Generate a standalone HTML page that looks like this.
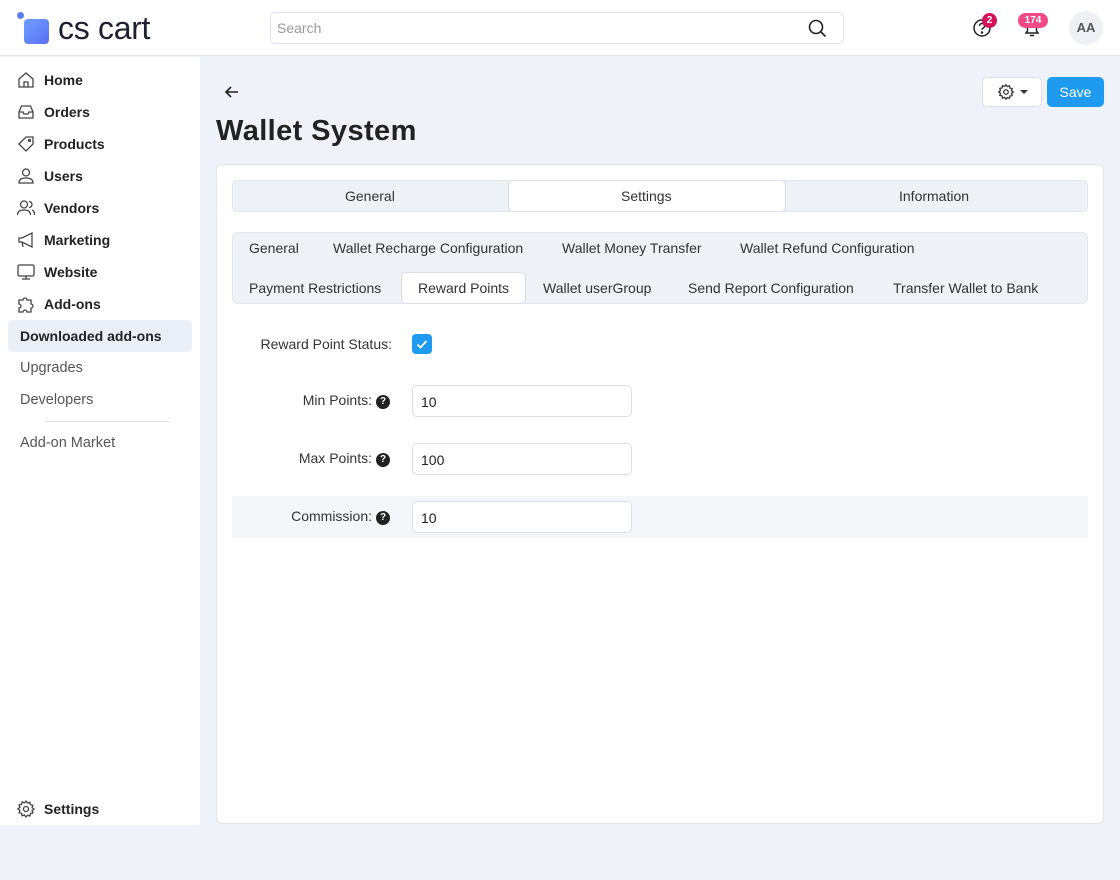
<!DOCTYPE html>
<html><head><meta charset="utf-8"><style>
*{box-sizing:border-box;margin:0;padding:0}
body{width:1120px;height:880px;background:#f0f2f9;font-family:"Liberation Sans","DejaVu Sans",sans-serif;color:#222;position:relative;overflow:hidden;font-size:14px}
.a{position:absolute;white-space:nowrap}
.hdr{left:0;top:0;width:1120px;height:56px;background:#fff;border-bottom:1px solid #e3e6ee}
.side{left:0;top:57px;width:200px;height:768px;background:#fff}
.nav{left:44px;font-weight:bold;font-size:14px;color:#222}
.ic{left:16px;width:20px;height:20px}
.sub{left:20px;font-size:14.5px;color:#555}
.card{left:216px;top:164px;width:888px;height:660px;background:#fff;border:1px solid #e1e4ec;border-radius:6px}
.tabbar{background:#eef1f6;border:1px solid #e1e5ed;border-radius:5px}
.t{font-size:14px;color:#333}
.act{background:#fff;border:1px solid #dadde5;border-radius:5px}
.lbl{font-size:14px;color:#333;text-align:right}
.inp{left:412px;width:220px;height:32px;border:1px solid #dcdfe6;border-radius:5px;background:#fff;padding:8px;font-size:14px;color:#222}
.q{display:inline-block;width:14px;height:14px;border-radius:50%;background:#222;color:#fff;font-size:10px;font-weight:bold;text-align:center;line-height:14px;margin-left:4px;vertical-align:1px}
</style></head><body>
<div class="a hdr"></div>
<div class="a" style="left:17px;top:12px;width:7px;height:7px;border-radius:50%;background:#5b7ff0"></div>
<div class="a" style="left:24px;top:19px;width:25px;height:25px;border-radius:4px;background:linear-gradient(135deg,#6fa0ff,#5b6cf5)"></div>
<div class="a" style="left:58px;top:10px;font-size:32px;color:#1c2030;letter-spacing:-0.3px">cs cart</div>
<div class="a" style="left:270px;top:12px;width:574px;height:32px;border:1px solid #dfe2ea;border-radius:5px;background:#fff"></div>
<div class="a" style="left:277px;top:20px;font-size:14px;color:#999">Search</div>
<svg class="a" style="left:807px;top:18px" width="20" height="20" viewBox="0 0 20 20" fill="none" stroke="#222" stroke-width="1.6"><circle cx="9" cy="9" r="6.5"/><path d="M14 14l4.5 4.5"/></svg>
<svg class="a" style="left:972px;top:18px" width="20" height="20" viewBox="0 0 20 20" fill="none" stroke="#222" stroke-width="1.5"><circle cx="10" cy="10" r="8"/><path d="M7.5 8a2.5 2.5 0 1 1 3.3 2.3c-.6.3-.8.7-.8 1.4"/><circle cx="10" cy="14.5" r=".5" fill="#222"/></svg>
<div class="a" style="left:982px;top:13px;width:15px;height:15px;border-radius:50%;background:#d6135a;color:#fff;font-size:10px;font-weight:bold;text-align:center;line-height:15px">2</div>
<svg class="a" style="left:1022px;top:18px" width="20" height="20" viewBox="0 0 20 20" fill="none" stroke="#222" stroke-width="1.5"><path d="M4 15h12l-1.5-2V9a4.5 4.5 0 0 0-9 0v4z"/><path d="M8 17.5h4"/></svg>
<div class="a" style="left:1018px;top:13px;width:30px;height:15px;border-radius:8px;background:#ef4a86;color:#fff;font-size:10px;font-weight:bold;text-align:center;line-height:15px">174</div>
<div class="a" style="left:1069px;top:11px;width:34px;height:34px;border-radius:50%;background:#eef0f5;color:#555;font-size:13px;font-weight:bold;text-align:center;line-height:34px">AA</div>

<div class="a side"></div>
<svg class="a ic" style="top:70px" viewBox="0 0 20 20" fill="none" stroke="#444" stroke-width="1.3"><path d="M3 9l7-6 7 6v8H3z"/><path d="M8 17v-5h4v5"/></svg>
<div class="a nav" style="top:72px">Home</div>
<svg class="a ic" style="top:102px" viewBox="0 0 20 20" fill="none" stroke="#444" stroke-width="1.3"><path d="M3 10l2.5-6h9L17 10v6H3z"/><path d="M3 10h4l1 2h4l1-2h4"/></svg>
<div class="a nav" style="top:104px">Orders</div>
<svg class="a ic" style="top:134px" viewBox="0 0 20 20" fill="none" stroke="#444" stroke-width="1.3"><path d="M10 3h7v7l-7 7-7-7z"/><circle cx="13.5" cy="6.5" r="1"/></svg>
<div class="a nav" style="top:136px">Products</div>
<svg class="a ic" style="top:166px" viewBox="0 0 20 20" fill="none" stroke="#444" stroke-width="1.3"><circle cx="10" cy="6.5" r="3.5"/><path d="M3 17c0-4 3.5-5 7-5s7 1 7 5z"/></svg>
<div class="a nav" style="top:168px">Users</div>
<svg class="a ic" style="top:198px" viewBox="0 0 20 20" fill="none" stroke="#444" stroke-width="1.3"><circle cx="8" cy="6.5" r="3.5"/><path d="M1.5 17c0-4 3-5 6.5-5s6.5 1 6.5 5M13 3.5a3 3 0 0 1 0 6M16 12c1.5.5 2.5 2 2.5 5"/></svg>
<div class="a nav" style="top:200px">Vendors</div>
<svg class="a ic" style="top:230px" viewBox="0 0 20 20" fill="none" stroke="#444" stroke-width="1.3"><path d="M3 8h3l10-5v14L6 12H3z"/><path d="M6 12l1 5"/></svg>
<div class="a nav" style="top:232px">Marketing</div>
<svg class="a ic" style="top:262px" viewBox="0 0 20 20" fill="none" stroke="#444" stroke-width="1.3"><rect x="2" y="3" width="16" height="11" rx="1.5"/><path d="M10 14v3M6 17h8"/></svg>
<div class="a nav" style="top:264px">Website</div>
<svg class="a ic" style="top:294px" viewBox="0 0 20 20" fill="none" stroke="#444" stroke-width="1.3"><path d="M3 6h4a2 2 0 1 1 4 0h4v4a2 2 0 1 1 0 4v4h-4a2 2 0 1 0-4 0H3v-4a2 2 0 1 0 0-4z"/></svg>
<div class="a nav" style="top:296px">Add-ons</div>
<div class="a" style="left:8px;top:320px;width:184px;height:32px;background:#e9eef7;border-radius:5px"></div>
<div class="a nav" style="left:20px;top:328px">Downloaded add-ons</div>
<div class="a sub" style="top:360px">Upgrades</div>
<div class="a sub" style="top:392px">Developers</div>
<div class="a" style="left:45px;top:421px;width:125px;height:1px;background:#dfe2e8"></div>
<div class="a sub" style="top:435px">Add-on Market</div>
<svg class="a ic" style="top:799px" viewBox="0 0 20 20" fill="none" stroke="#444" stroke-width="1.3"><circle cx="10" cy="10" r="2.5"/><path d="M10 2l1.5 2 2.4-.8.5 2.5 2.5.5-.8 2.4 2 1.5-2 1.5.8 2.4-2.5.5-.5 2.5-2.4-.8L10 18l-1.5-2-2.4.8-.5-2.5-2.5-.5.8-2.4-2-1.5 2-1.5-.8-2.4 2.5-.5.5-2.5 2.4.8z"/></svg>
<div class="a nav" style="top:801px">Settings</div>

<svg class="a" style="left:222px;top:82px" width="20" height="20" viewBox="0 0 20 20" fill="none" stroke="#222" stroke-width="1.6"><path d="M16 10H4M9 5l-5 5 5 5"/></svg>
<div class="a" style="left:216px;top:115px;font-size:29px;font-weight:bold;color:#222;letter-spacing:0.4px">Wallet System</div>
<div class="a" style="left:982px;top:77px;width:60px;height:30px;background:#fff;border:1px solid #dcdfe6;border-radius:5px"></div>
<svg class="a" style="left:997px;top:83px" width="18" height="18" viewBox="0 0 20 20" fill="none" stroke="#333" stroke-width="1.4"><circle cx="10" cy="10" r="2.5"/><path d="M10 2l1.5 2 2.4-.8.5 2.5 2.5.5-.8 2.4 2 1.5-2 1.5.8 2.4-2.5.5-.5 2.5-2.4-.8L10 18l-1.5-2-2.4.8-.5-2.5-2.5-.5.8-2.4-2-1.5 2-1.5-.8-2.4 2.5-.5.5-2.5 2.4.8z"/></svg>
<div class="a" style="left:1020px;top:90px;border-left:4px solid transparent;border-right:4px solid transparent;border-top:4px solid #333"></div>
<div class="a" style="left:1047px;top:77px;width:57px;height:30px;background:#1e9af0;border-radius:5px;color:#fff;font-size:14px;text-align:center;line-height:30px">Save</div>

<div class="a card"></div>
<div class="a tabbar" style="left:232px;top:180px;width:856px;height:32px"></div>
<div class="a act" style="left:508px;top:180px;width:278px;height:32px"></div>
<div class="a t" style="left:345px;top:188px">General</div>
<div class="a t" style="left:621px;top:188px">Settings</div>
<div class="a t" style="left:899px;top:188px">Information</div>

<div class="a tabbar" style="left:232px;top:232px;width:856px;height:72px"></div>
<div class="a act" style="left:401px;top:272px;width:125px;height:32px"></div>
<div class="a t" style="left:249px;top:240px">General</div>
<div class="a t" style="left:333px;top:240px">Wallet Recharge Configuration</div>
<div class="a t" style="left:562px;top:240px">Wallet Money Transfer</div>
<div class="a t" style="left:740px;top:240px">Wallet Refund Configuration</div>
<div class="a t" style="left:249px;top:280px">Payment Restrictions</div>
<div class="a t" style="left:418px;top:280px">Reward Points</div>
<div class="a t" style="left:543px;top:280px">Wallet userGroup</div>
<div class="a t" style="left:688px;top:280px">Send Report Configuration</div>
<div class="a t" style="left:893px;top:280px">Transfer Wallet to Bank</div>

<div class="a lbl" style="right:728px;top:336px">Reward Point Status:</div>
<div class="a" style="left:412px;top:334px;width:20px;height:20px;border-radius:4px;background:#1e9af0"></div>
<svg class="a" style="left:412px;top:334px" width="20" height="20" viewBox="0 0 20 20" fill="none" stroke="#fff" stroke-width="1.8"><path d="M5.5 10.5l3 3 6-6.5"/></svg>
<div class="a lbl" style="right:730px;top:392px">Min Points:<span class="q">?</span></div>
<div class="a inp" style="top:385px">10</div>
<div class="a lbl" style="right:730px;top:450px">Max Points:<span class="q">?</span></div>
<div class="a inp" style="top:443px">100</div>
<div class="a" style="left:232px;top:496px;width:856px;height:42px;background:#f4f6fa"></div>
<div class="a lbl" style="right:730px;top:508px">Commission:<span class="q">?</span></div>
<div class="a inp" style="top:501px">10</div>
</body></html>
